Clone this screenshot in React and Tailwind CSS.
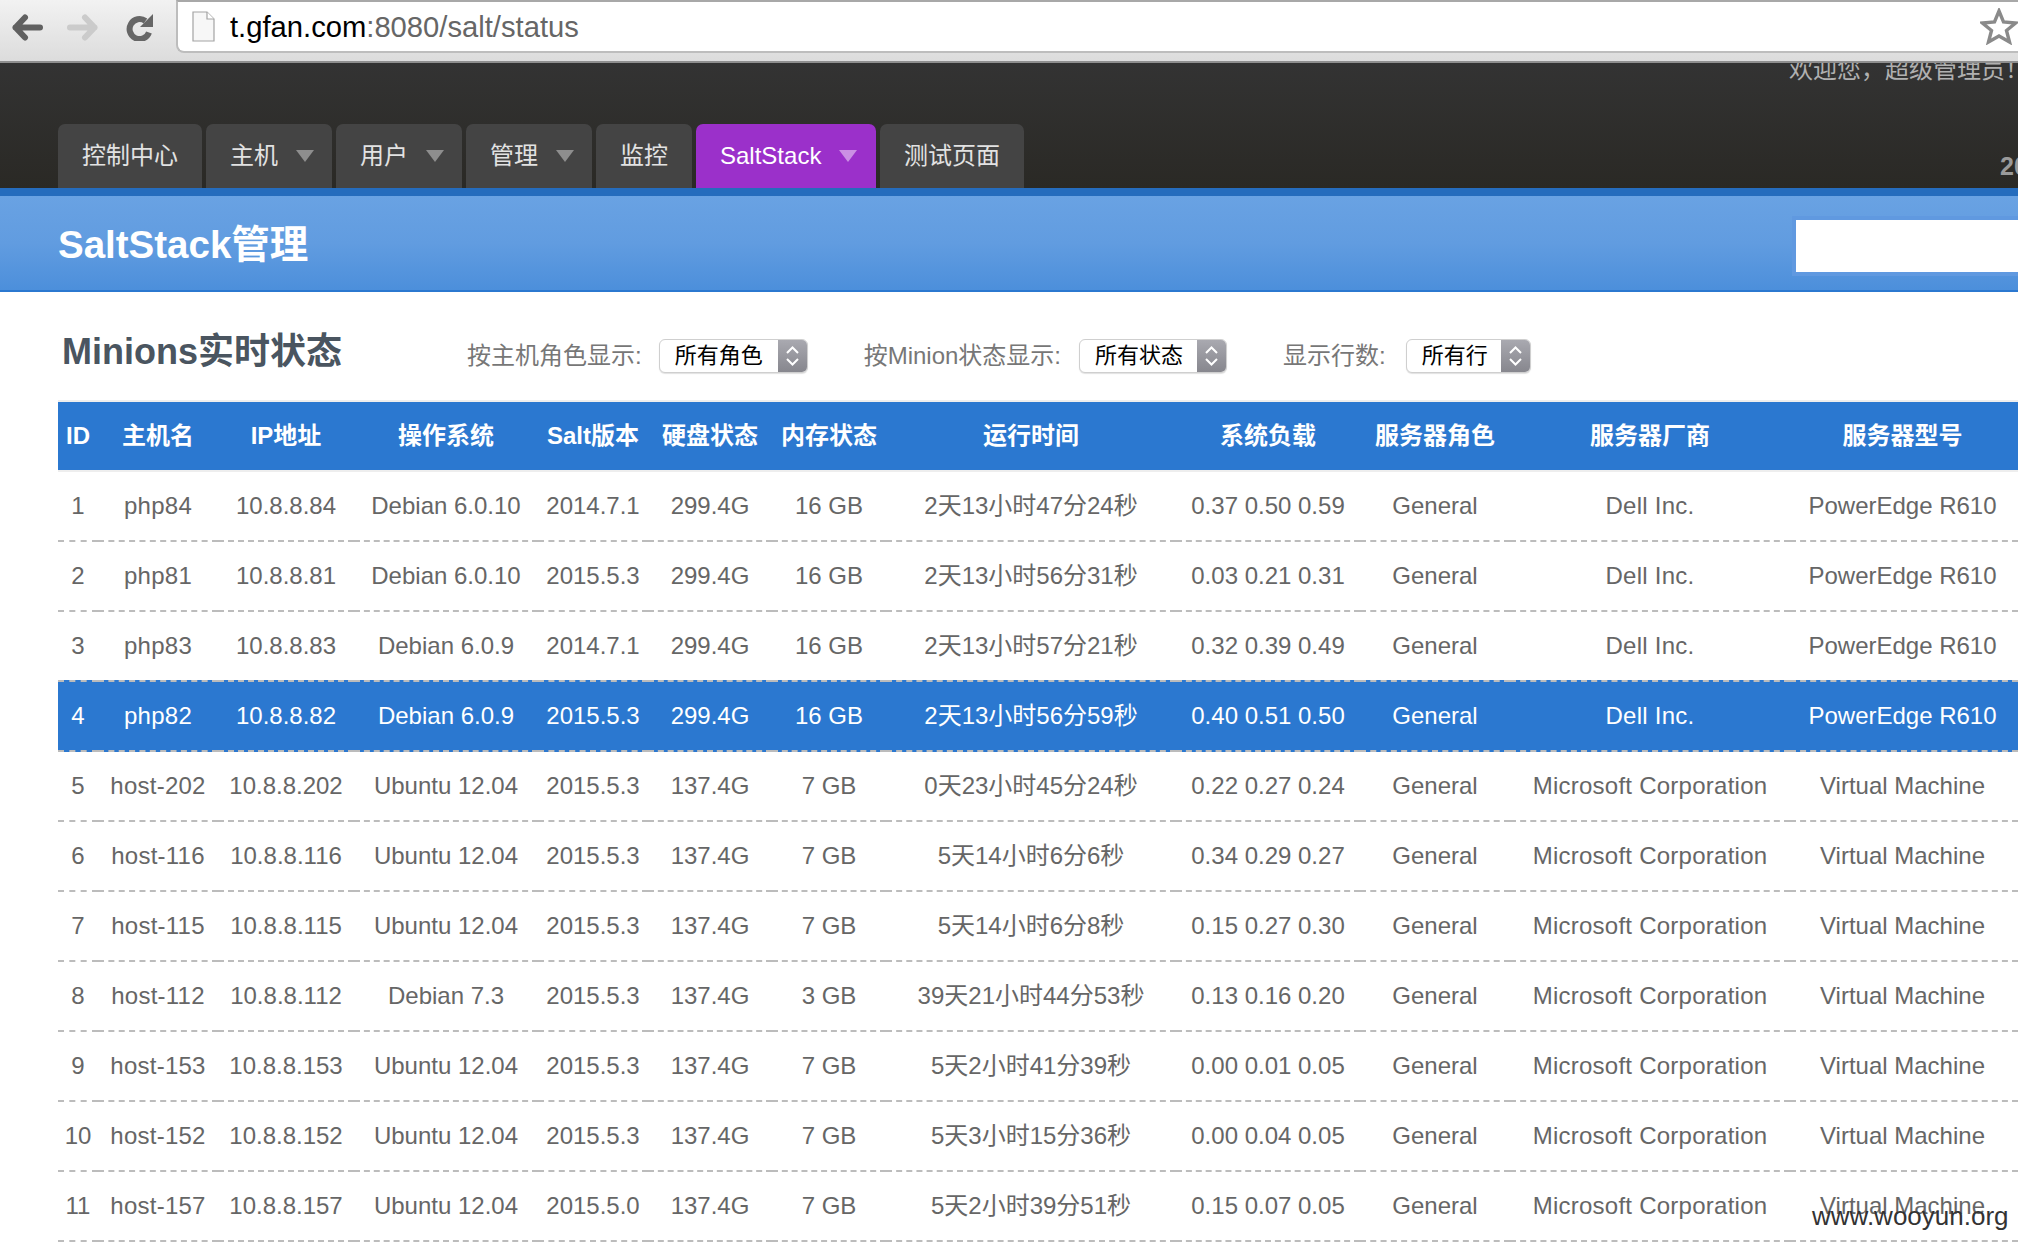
const COLUMNS = [
  { title: "ID", width: "w-[40px]" },
  { title: "主机名", width: "w-[120px]" },
  { title: "IP地址", width: "w-[136px]" },
  { title: "操作系统", width: "w-[184px]" },
  { title: "Salt版本", width: "w-[110px]" },
  { title: "硬盘状态", width: "w-[124px]" },
  { title: "内存状态", width: "w-[114px]" },
  { title: "运行时间", width: "w-[290px]" },
  { title: "系统负载", width: "w-[184px]" },
  { title: "服务器角色", width: "w-[150px]" },
  { title: "服务器厂商", width: "w-[280px]" },
  { title: "服务器型号", width: "w-[228px]" },
];

const DELL = ["General", "Dell Inc.", "PowerEdge R610"];
const MS = ["General", "Microsoft Corporation", "Virtual Machine"];

const ROWS = [
  ["1", "php84", "10.8.8.84", "Debian 6.0.10", "2014.7.1", "299.4G", "16 GB", "2天13小时47分24秒", "0.37 0.50 0.59", ...DELL],
  ["2", "php81", "10.8.8.81", "Debian 6.0.10", "2015.5.3", "299.4G", "16 GB", "2天13小时56分31秒", "0.03 0.21 0.31", ...DELL],
  ["3", "php83", "10.8.8.83", "Debian 6.0.9", "2014.7.1", "299.4G", "16 GB", "2天13小时57分21秒", "0.32 0.39 0.49", ...DELL],
  ["4", "php82", "10.8.8.82", "Debian 6.0.9", "2015.5.3", "299.4G", "16 GB", "2天13小时56分59秒", "0.40 0.51 0.50", ...DELL],
  ["5", "host-202", "10.8.8.202", "Ubuntu 12.04", "2015.5.3", "137.4G", "7 GB", "0天23小时45分24秒", "0.22 0.27 0.24", ...MS],
  ["6", "host-116", "10.8.8.116", "Ubuntu 12.04", "2015.5.3", "137.4G", "7 GB", "5天14小时6分6秒", "0.34 0.29 0.27", ...MS],
  ["7", "host-115", "10.8.8.115", "Ubuntu 12.04", "2015.5.3", "137.4G", "7 GB", "5天14小时6分8秒", "0.15 0.27 0.30", ...MS],
  ["8", "host-112", "10.8.8.112", "Debian 7.3", "2015.5.3", "137.4G", "3 GB", "39天21小时44分53秒", "0.13 0.16 0.20", ...MS],
  ["9", "host-153", "10.8.8.153", "Ubuntu 12.04", "2015.5.3", "137.4G", "7 GB", "5天2小时41分39秒", "0.00 0.01 0.05", ...MS],
  ["10", "host-152", "10.8.8.152", "Ubuntu 12.04", "2015.5.3", "137.4G", "7 GB", "5天3小时15分36秒", "0.00 0.04 0.05", ...MS],
  ["11", "host-157", "10.8.8.157", "Ubuntu 12.04", "2015.5.0", "137.4G", "7 GB", "5天2小时39分51秒", "0.15 0.07 0.05", ...MS],
];

const TABS = [
  { label: "控制中心", width: "w-[144px]" },
  { label: "主机", caret: true, width: "w-[126px]" },
  { label: "用户", caret: true, width: "w-[126px]" },
  { label: "管理", caret: true, width: "w-[126px]" },
  { label: "监控", width: "w-[96px]" },
  { label: "SaltStack", caret: true, active: true, width: "w-[180px]" },
  { label: "测试页面", width: "w-[144px]" },
];

function rowClass(id) {
  if (id === "3") return "h-[68px]";
  if (id === "4") return "h-[72px] bg-[#2b78d0] text-white";
  return "h-[70px]";
}

function cellClass(id, col) {
  const spaced = col === 1 || col === 10 ? "tracking-[0.25px]" : "";
  const last = col === 11 ? "pr-[3px]" : "";
  if (id === "3") return `whitespace-nowrap ${spaced} ${last}`;
  if (id === "4") return `whitespace-nowrap border-y-2 border-dashed border-[#bcbcbc] ${spaced} ${last}`;
  return `whitespace-nowrap border-b-2 border-dashed border-[#bcbcbc] ${spaced} ${last}`;
}

function BrowserBar() {
  return (
    <div className="flex h-[63px] items-start border-b-2 border-[#8f8f8f] bg-gradient-to-b from-[#f2f2f2] to-[#dcdcdc]">
      <div className="flex w-[176px] shrink-0 items-center pl-[12px] pt-[14px]">
        <svg width="31" height="27" viewBox="0 0 31 27" fill="none" stroke="#606060" strokeWidth="6" strokeLinecap="round" strokeLinejoin="round">
          <path d="M13 3.5 L3.5 13.5 L13 23.5 M3.5 13.5 H28" />
        </svg>
        <svg className="ml-[24px]" width="31" height="27" viewBox="0 0 31 27" fill="none" stroke="#cbcbcb" strokeWidth="6" strokeLinecap="round" strokeLinejoin="round">
          <path d="M18 3.5 L27.5 13.5 L18 23.5 M27.5 13.5 H3" />
        </svg>
        <svg className="ml-[28px]" width="28" height="27" viewBox="0 0 28 27" fill="none">
          <path d="M23 18.5 A10 10 0 1 1 19.5 7" stroke="#666666" strokeWidth="6" />
          <path d="M27 0 V13 H14 Z" fill="#666666" />
        </svg>
      </div>
      <div className="flex h-[53px] flex-1 items-center rounded-bl-[8px] border-y-2 border-l-2 border-[#bdbdbd] border-t-[#a8a8a8] bg-white pl-[14px]">
        <svg width="23" height="31" viewBox="0 0 23 31">
          <path d="M1 1 H15 L22 8 V30 H1 Z" fill="#f7f7f7" stroke="#a3a3a3" strokeWidth="1.2" />
          <path d="M15 1 V8 H22" fill="#ffffff" stroke="#a3a3a3" strokeWidth="1.2" />
        </svg>
        <span className="ml-[15px] mt-[3px] text-[29.2px] text-[#666]">
          <span className="text-black">t.gfan.com</span>:8080/salt/status
        </span>
        <svg className="ml-auto" width="38" height="37" viewBox="0 0 38 37">
          <path d="M19 3 L23.5 14 L35.5 15 L26.5 22.5 L29.5 34 L19 28 L8.5 34 L11.5 22.5 L2.5 15 L14.5 14 Z" fill="#ffffff" stroke="#8a8a8a" strokeWidth="3.4" strokeLinejoin="miter" />
        </svg>
      </div>
    </div>
  );
}

function NavTab({ tab }) {
  return (
    <div
      className={`flex h-[64px] ${tab.width} items-center rounded-t-[7px] pl-[24px] ${
        tab.active ? "bg-[#9b30ca] text-white" : "bg-[#444444] text-[#e2e2e2]"
      }`}
    >
      <span className="text-[24px]">{tab.label}</span>
      {tab.caret && (
        <span
          className={`ml-[18px] h-0 w-0 border-x-[9px] border-t-[12px] border-x-transparent ${
            tab.active ? "border-t-[#cb90e4]" : "border-t-[#8e8e8e]"
          }`}
        />
      )}
    </div>
  );
}

function Select({ value, width, gap }) {
  return (
    <div className={`${gap} flex h-[34px] ${width} items-stretch overflow-hidden rounded-[6px] border border-[#cfcfcf] bg-white shadow-[0_1px_1px_rgba(0,0,0,0.12)]`}>
      <span className="flex flex-1 items-center pl-[15px] text-[22px] leading-none text-black">{value}</span>
      <span className="flex w-[29px] items-center justify-center bg-gradient-to-b from-[#a9a9b0] to-[#87878e]">
        <svg width="15" height="22" viewBox="0 0 15 22" fill="none" stroke="#ffffff" strokeWidth="2">
          <path d="M2 8 L7.5 2.5 L13 8 M2 14 L7.5 19.5 L13 14" />
        </svg>
      </span>
    </div>
  );
}

export default function App() {
  return (
    <div className="relative h-[1246px] w-[2018px] overflow-hidden bg-white font-['Liberation_Sans','Noto_Sans_CJK_SC',sans-serif]">
      <BrowserBar />

      <div className="relative h-[125px] overflow-hidden bg-gradient-to-b from-[#333333] to-[#2a2925]">
        <span className="absolute left-[1789px] top-[-11px] whitespace-nowrap text-[24px] text-[#b0b0b0]">
          欢迎您，超级管理员！
        </span>
        <span className="absolute left-[2000px] top-[85px] text-[25px] font-bold text-[#9a9a9a]">20</span>
        <div className="flex h-full items-end gap-[4px] pl-[58px]">
          {TABS.map((tab) => (
            <NavTab key={tab.label} tab={tab} />
          ))}
        </div>
      </div>

      <div className="h-[8px] bg-[#256cbd]" />
      <div className="flex h-[96px] items-start justify-between border-b-2 border-[#2b78d0] bg-gradient-to-b from-[#69a2e3] via-[#619ce0] to-[#4c8fdb] pl-[58px]">
        <h1 className="mt-[20px] text-[38.5px] font-bold text-white">SaltStack管理</h1>
        <div className="mt-[20px] h-[60px] w-[226px] border-[4px] border-r-0 border-[#6099e0] bg-white" />
      </div>

      <div className="h-[108px] pl-[62px] pt-[47px]">
        <div className="flex h-[34px] items-center">
          <h2 className="mb-[9px] w-[405px] shrink-0 text-[36px] font-bold leading-none text-[#4a5560]">Minions实时状态</h2>
          <span className="whitespace-nowrap text-[24px] text-[#777]">按主机角色显示:</span>
          <Select value="所有角色" width="w-[149px]" gap="ml-[17px]" />
          <span className="ml-[56px] whitespace-nowrap text-[24px] text-[#777]">按Minion状态显示:</span>
          <Select value="所有状态" width="w-[148px]" gap="ml-[18px]" />
          <span className="ml-[56px] whitespace-nowrap text-[24px] text-[#777]">显示行数:</span>
          <Select value="所有行" width="w-[125px]" gap="ml-[20px]" />
        </div>
      </div>

      <div className="pl-[58px]">
        <table className="w-[1960px] table-fixed border-separate border-spacing-0 text-center text-[24px] text-[#666]">
          <colgroup>
            {COLUMNS.map((col) => (
              <col key={col.title} className={col.width} />
            ))}
          </colgroup>
          <thead>
            <tr className="h-[72px] bg-[#2b78d0] text-white">
              {COLUMNS.map((col, i) => (
                <th key={col.title} className={`whitespace-nowrap border-y-2 border-[#eeeeee] font-bold ${i === 11 ? "pr-[3px]" : ""}`}>
                  {col.title}
                </th>
              ))}
            </tr>
          </thead>
          <tbody>
            {ROWS.map((row) => (
              <tr key={row[0]} className={rowClass(row[0])}>
                {row.map((cell, i) => (
                  <td key={i} className={cellClass(row[0], i)}>
                    {cell}
                  </td>
                ))}
              </tr>
            ))}
          </tbody>
        </table>
      </div>

      <span className="absolute left-[1812px] top-[1197px] text-[26px] text-[#333]">www.wooyun.org</span>
    </div>
  );
}
